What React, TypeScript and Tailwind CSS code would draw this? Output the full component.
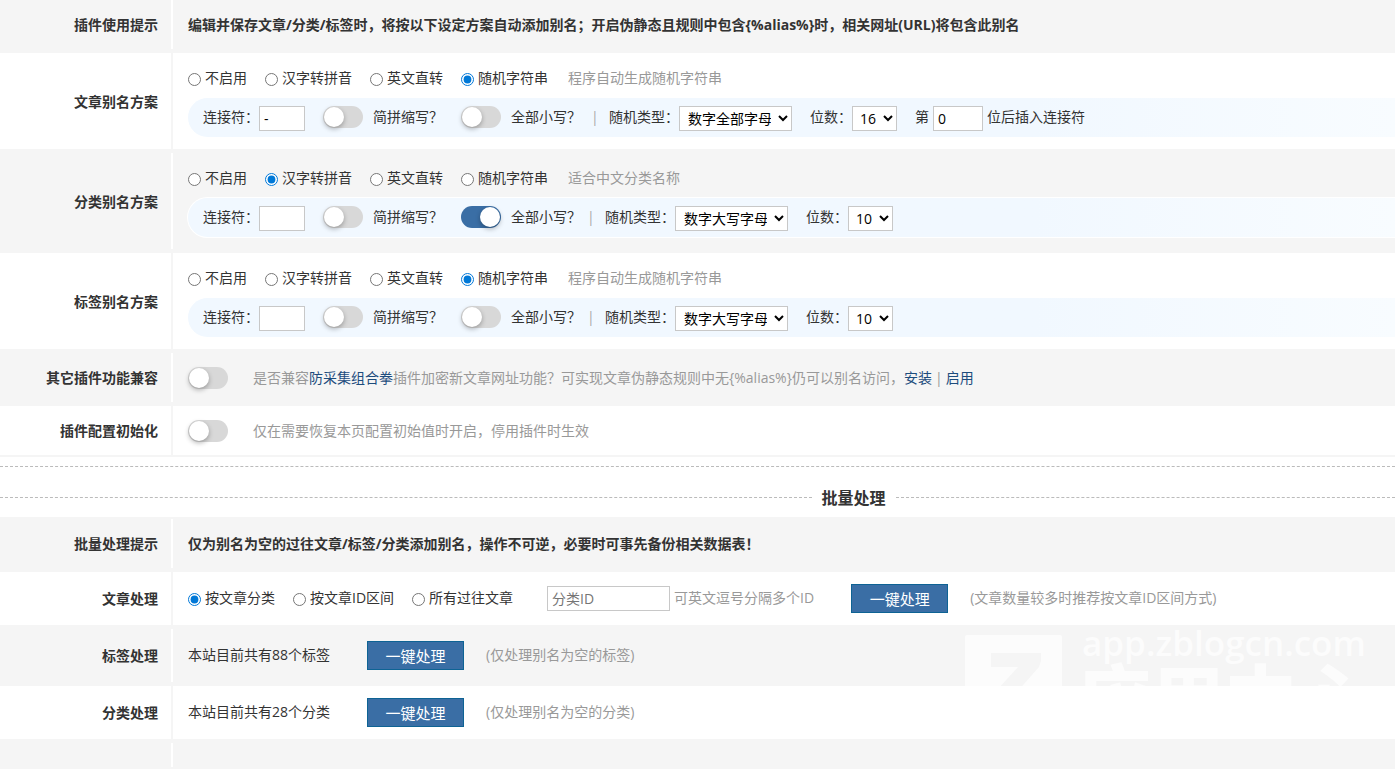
import React from "react";

type RowProps = {
  label?: string;
  shaded?: boolean;
  pad?: string;
  minHeight: string;
  children?: React.ReactNode;
  overlay?: React.ReactNode;
};

function Row({ label, shaded = false, pad = "", minHeight, children, overlay }: RowProps) {
  return (
    <div className={`relative overflow-hidden ${shaded ? "bg-[#f5f5f5]" : "bg-white"} ${pad}`}>
      {overlay}
      <div className={`relative flex ${minHeight}`}>
        <div
          className={`flex w-[173px] shrink-0 items-center justify-end border-r-2 pr-[13px] font-bold ${
            shaded ? "border-white" : "border-[#f5f5f5]"
          }`}
        >
          {label}
        </div>
        <div className="flex min-w-0 grow flex-col justify-center pl-[15px]">{children}</div>
      </div>
    </div>
  );
}

function Radio({ name, label, checked }: { name: string; label: string; checked?: boolean }) {
  return (
    <label className="flex items-center gap-1">
      <input type="radio" name={name} defaultChecked={checked} className="m-0 mt-1 size-[13px] accent-[#0078d7]" />
      {label}
    </label>
  );
}

function Toggle({ label, checked, ariaLabel }: { label?: string; checked?: boolean; ariaLabel?: string }) {
  return (
    <label className="flex items-center gap-[10px]">
      <input
        type="checkbox"
        role="switch"
        aria-label={ariaLabel}
        defaultChecked={checked}
        className="m-0 flex h-[22px] w-10 shrink-0 appearance-none items-center rounded-full bg-[#d8d8d8] px-px before:size-5 before:rounded-full before:bg-white before:shadow-[0_2px_5px_rgba(0,0,0,0.3)] before:content-[''] checked:justify-end checked:bg-[#3a6ea5]"
      />
      {label}
    </label>
  );
}

const field = "h-[25px] border border-[#c8c8c8] bg-white text-black";

type SchemeProps = {
  id: string;
  label: string;
  shaded?: boolean;
  selected: number;
  hint: string;
  connector: string;
  lower?: boolean;
  kind: string;
  digits: string;
  insertAt?: string;
};

const methods = ["不启用", "汉字转拼音", "英文直转", "随机字符串"];

function Scheme(p: SchemeProps) {
  return (
    <Row label={p.label} shaded={p.shaded} pad={p.shaded ? "py-1" : ""} minHeight="min-h-24">
      <div className="mt-[3px] flex h-[21px] items-center gap-[18px] whitespace-nowrap">
        {methods.map((m, i) => (
          <Radio key={m} name={`${p.id}-method`} label={m} checked={i === p.selected} />
        ))}
        <span className="pl-0.5 text-[#999]">{p.hint}</span>
      </div>
      <div className="mt-[9px] -ml-px flex h-[41px] items-center gap-[18px] whitespace-nowrap rounded-l-full border border-r-0 border-white bg-linear-to-r from-[#f1f8ff] from-70% to-[#f8fcff] pb-0.5 pl-[15px]">
        <label className="flex items-center">
          连接符：
          <input type="text" defaultValue={p.connector} className={`${field} mt-1 w-[46px] px-1`} />
        </label>
        <Toggle label="简拼缩写？" />
        <Toggle label="全部小写？" checked={p.lower} />
        <div className={`-ml-3 flex items-center ${p.insertAt !== undefined ? "pl-1" : ""}`}>
          <span className="w-[18px] text-[#aaa]">|</span>
          <label className="flex items-center">
            随机类型：
            <select defaultValue={p.kind} className={`${field} mt-1 w-[113px] px-1`}>
              <option>{p.kind}</option>
            </select>
          </label>
        </div>
        <label className="flex items-center">
          位数：
          <select defaultValue={p.digits} className={`${field} mt-1 w-[45px] pr-0 pl-[3px]`}>
            <option>{p.digits}</option>
          </select>
        </label>
        {p.insertAt !== undefined && (
          <label className="flex items-center gap-1">
            第
            <input type="text" defaultValue={p.insertAt} className={`${field} mt-1 w-[50px] px-1`} />
            位后插入连接符
          </label>
        )}
      </div>
    </Row>
  );
}

function RunButton() {
  return (
    <button type="button" className="h-[29px] w-[97px] shrink-0 border border-[#0e6394] bg-[#3a6ea5] pt-px text-[15px] leading-[26px] text-white">
      一键处理
    </button>
  );
}

function Watermark() {
  return (
    <div aria-hidden="true" className="absolute top-0 right-0 flex w-[430px] gap-5 whitespace-nowrap text-[#fcfcfc]">
      <svg width="97" height="97" viewBox="0 0 97 97" className="mt-[10px] shrink-0">
        <rect width="97" height="97" rx="2" fill="#fcfcfc" />
        <path d="M26 18H76V26L74 32L44 66H72L70 80H20L22 66L53 32H26Z" fill="#f5f5f5" />
      </svg>
      <div>
        <div className="h-9 text-[35px] leading-9 font-semibold">app.zblogcn.com</div>
        <div className="-ml-1 text-[73px] leading-[73px] font-black">应用中心</div>
      </div>
    </div>
  );
}

export default function App() {
  return (
    <main className="overflow-hidden bg-white font-['Open_Sans','Noto_Sans_CJK_SC',sans-serif] text-sm leading-[21px] text-[#333]">
      <form>
        <Row label="插件使用提示" shaded pad="pb-1" minHeight="min-h-[49px]">
          <p className="font-bold">
            编辑并保存文章/分类/标签时，将按以下设定方案自动添加别名；开启伪静态且规则中包含{"{%alias%}"}时，相关网址(URL)将包含此别名
          </p>
        </Row>
        <Scheme id="post" label="文章别名方案" selected={3} hint="程序自动生成随机字符串" connector="-" kind="数字全部字母" digits="16" insertAt="0" />
        <Scheme id="category" label="分类别名方案" shaded selected={1} hint="适合中文分类名称" connector="" lower kind="数字大写字母" digits="10" />
        <Scheme id="tag" label="标签别名方案" selected={3} hint="程序自动生成随机字符串" connector="" kind="数字大写字母" digits="10" />
        <Row label="其它插件功能兼容" shaded pad="py-1" minHeight="min-h-[49px]">
          <div className="flex items-center gap-[25px]">
            <Toggle ariaLabel="其它插件功能兼容" />
            <p className="text-[#999]">
              是否兼容
              <a href="#plugin" className="text-[#1d4c7d]">防采集组合拳</a>
              插件加密新文章网址功能？可实现文章伪静态规则中无{"{%alias%}"}仍可以别名访问，
              <a href="#install" className="text-[#1d4c7d]">安装</a>
              <span className="mx-[3px]">|</span>
              <a href="#enable" className="text-[#1d4c7d]">启用</a>
            </p>
          </div>
        </Row>
        <Row label="插件配置初始化" minHeight="min-h-[49px]">
          <div className="flex items-center gap-[25px]">
            <Toggle ariaLabel="插件配置初始化" />
            <p className="text-[#999]">仅在需要恢复本页配置初始值时开启，停用插件时生效</p>
          </div>
        </Row>
      </form>

      <div className="border-t-2 border-[#f5f5f5] pt-[9px]">
        <div className="border-t border-dashed border-[#bbb]" />
      </div>
      <div className="flex h-[50px] items-center pt-[11px]">
        <div className="grow-13 basis-0 border-t border-dashed border-[#bbb]" />
        <h2 className="px-[10px] text-base leading-6 font-semibold">批量处理</h2>
        <div className="grow-8 basis-0 border-t border-dashed border-[#bbb]" />
      </div>

      <form>
        <Row label="批量处理提示" shaded pad="pt-0.5 pb-1" minHeight="min-h-[49px]">
          <p className="font-bold">仅为别名为空的过往文章/标签/分类添加别名，操作不可逆，必要时可事先备份相关数据表！</p>
        </Row>
        <Row label="文章处理" minHeight="min-h-[53px]">
          <div className="flex items-center whitespace-nowrap">
            <div className="flex gap-[18px] pb-0.5">
              <Radio name="range" label="按文章分类" checked />
              <Radio name="range" label="按文章ID区间" />
              <Radio name="range" label="所有过往文章" />
            </div>
            <label className="ml-[34px] flex items-center gap-1 text-[#999]">
              <input type="text" placeholder="分类ID" className={`${field} w-[123px] px-1 placeholder:text-[#757575]`} />
              <span className="pb-0.5">可英文逗号分隔多个ID</span>
            </label>
            <div className="ml-[37px] flex items-center gap-[22px]">
              <RunButton />
              <span className="pb-0.5 text-[#999]">(文章数量较多时推荐按文章ID区间方式)</span>
            </div>
          </div>
        </Row>
        <Row label="标签处理" shaded pad="py-1" minHeight="min-h-[53px]" overlay={<Watermark />}>
          <div className="flex items-center">
            <span className="mr-[37px] pb-[3px]">本站目前共有88个标签</span>
            <div className="flex items-center gap-[22px]">
              <RunButton />
              <span className="pb-0.5 text-[#999]">(仅处理别名为空的标签)</span>
            </div>
          </div>
        </Row>
        <Row label="分类处理" minHeight="min-h-[53px]">
          <div className="flex items-center">
            <span className="mr-[37px] pb-[3px]">本站目前共有28个分类</span>
            <div className="flex items-center gap-[22px]">
              <RunButton />
              <span className="pb-0.5 text-[#999]">(仅处理别名为空的分类)</span>
            </div>
          </div>
        </Row>
        <Row shaded pad="pt-1 pb-0.5" minHeight="min-h-6" />
      </form>
    </main>
  );
}
